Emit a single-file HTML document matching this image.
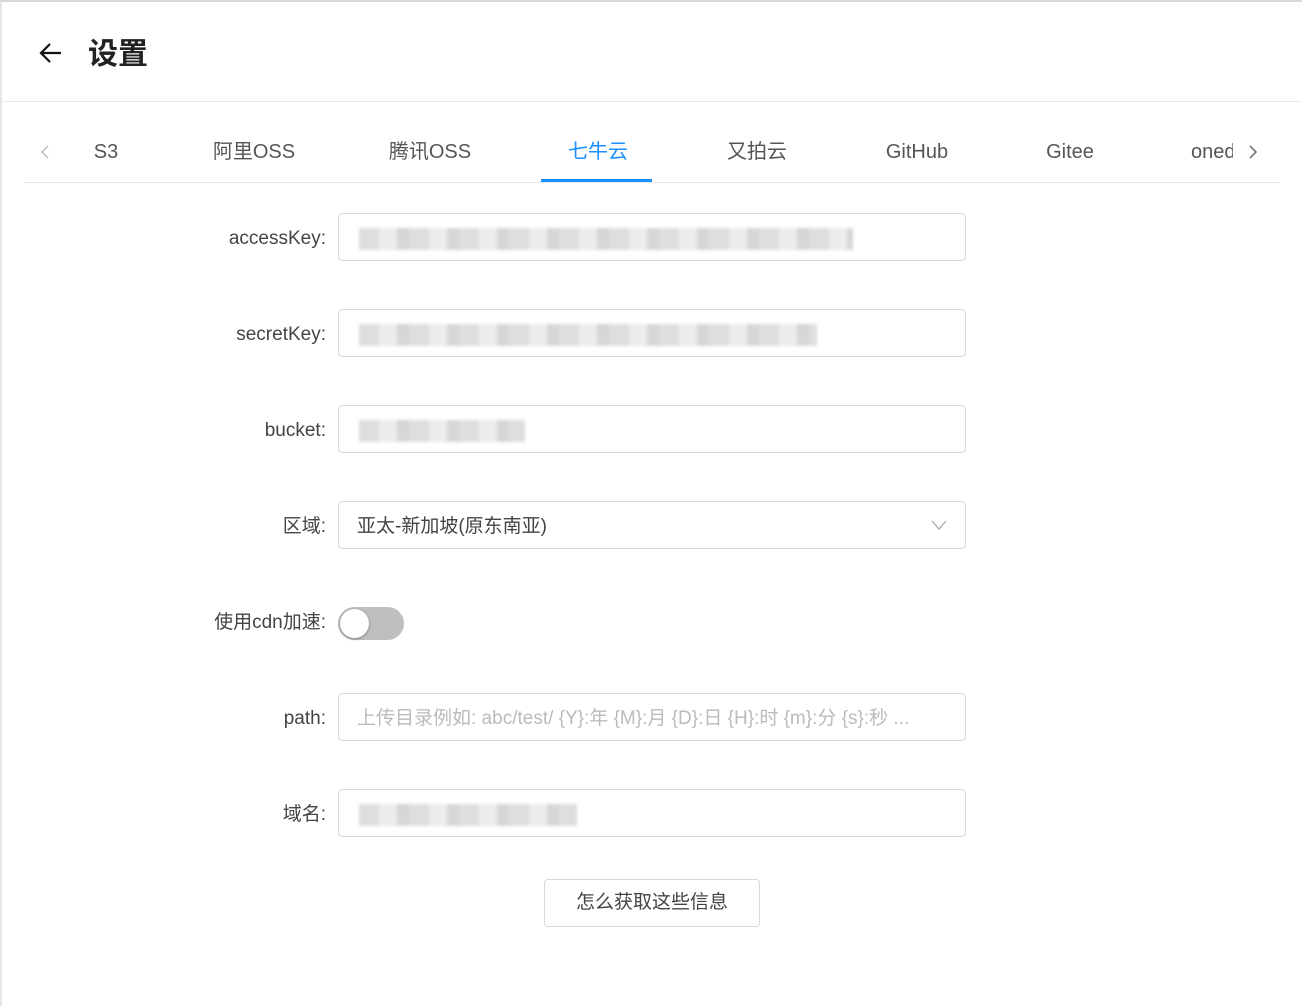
<!DOCTYPE html>
<html><head><meta charset="utf-8"><style>
*{box-sizing:border-box;margin:0;padding:0}
body{width:1302px;height:1006px;background:#fff;font-family:"Liberation Sans","Noto Sans CJK SC",sans-serif;color:#333;position:relative;overflow:hidden}
.frame{position:absolute;left:0;top:0;width:1302px;height:1006px;border-top:2px solid #d9d9d9;border-left:2px solid #e6e6e6}
.hdr{position:absolute;left:2px;top:2px;right:0;height:100px;border-bottom:1px solid #e8e8e8}
.title{position:absolute;left:86px;top:33px;font-size:30px;font-weight:bold;color:#222;line-height:40px}
.tabs{position:absolute;left:24px;top:102px;width:1256px;height:81px;border-bottom:1px solid #e8e8e8}
.tab{position:absolute;top:36px;height:28px;line-height:28px;font-size:20px;color:#555;transform:translateX(-50%);white-space:nowrap}
.ink{position:absolute;left:517px;top:77px;width:111px;height:3px;background:#1890ff}
.lbl{position:absolute;right:976px;font-size:19px;line-height:28px;height:28px;color:#444;white-space:nowrap}
.inp{position:absolute;left:338px;width:628px;height:48px;border:1px solid #d9d9d9;border-radius:4px}
.blur{position:absolute;top:14px;height:22px;left:20px;background:repeating-linear-gradient(90deg,#dedede 0 20px,#ececec 20px 38px,#d6d6d6 38px 50px);filter:blur(1.5px)}
.txt{position:absolute;left:18px;top:11px;font-size:19px;line-height:28px;white-space:nowrap}
</style></head><body>
<div class="frame"></div>
<div class="hdr">
<svg style="position:absolute;left:36px;top:39px" width="26" height="24" viewBox="0 0 26 24"><path d="M23 12H4M12 3 3 12l9 9" fill="none" stroke="#111" stroke-width="2.2"/></svg>
<div class="title">设置</div>
</div>
<div class="tabs">
<svg style="position:absolute;left:16px;top:42px" width="10" height="16" viewBox="0 0 10 16"><path d="M8 2 2 8l6 6" fill="none" stroke="#bbb" stroke-width="1.5"/></svg>
<div class="tab" style="left:82px">S3</div>
<div class="tab" style="left:230px">阿里OSS</div>
<div class="tab" style="left:406px">腾讯OSS</div>
<div class="tab" style="left:574px;color:#1890ff">七牛云</div>
<div class="tab" style="left:733px">又拍云</div>
<div class="tab" style="left:893px">GitHub</div>
<div class="tab" style="left:1046px">Gitee</div>
<div class="tab" style="left:1167px;transform:none;width:42px;overflow:hidden">onedrive</div>
<svg style="position:absolute;left:1224px;top:42px" width="10" height="16" viewBox="0 0 10 16"><path d="M2 2l6 6-6 6" fill="none" stroke="#666" stroke-width="1.5"/></svg>
<div class="ink"></div>
</div>

<div class="lbl" style="top:225px">accessKey:</div>
<div class="inp" style="top:213px"><div class="blur" style="width:494px"></div></div>
<div class="lbl" style="top:321px">secretKey:</div>
<div class="inp" style="top:309px"><div class="blur" style="width:458px"></div></div>
<div class="lbl" style="top:417px">bucket:</div>
<div class="inp" style="top:405px"><div class="blur" style="width:166px"></div></div>
<div class="lbl" style="top:513px">区域:</div>
<div class="inp" style="top:501px"><div class="txt" style="color:#444">亚太-新加坡(原东南亚)</div>
<svg style="position:absolute;right:18px;top:17px" width="16" height="12" viewBox="0 0 16 12"><path d="M1 2l7 8 7-8" fill="none" stroke="#aaa" stroke-width="1.3"/></svg></div>
<div class="lbl" style="top:609px">使用cdn加速:</div>
<div style="position:absolute;left:338px;top:607px;width:66px;height:33px;border-radius:17px;background:#bfbfbf"><div style="position:absolute;left:2px;top:2px;width:29px;height:29px;border-radius:50%;background:#fff;box-shadow:0 1px 3px rgba(0,0,0,.3)"></div></div>
<div class="lbl" style="top:705px">path:</div>
<div class="inp" style="top:693px"><div class="txt" style="color:#bbb">上传目录例如: abc/test/ {Y}:年 {M}:月 {D}:日 {H}:时 {m}:分 {s}:秒 ...</div></div>
<div class="lbl" style="top:801px">域名:</div>
<div class="inp" style="top:789px"><div class="blur" style="width:218px"></div></div>
<div style="position:absolute;left:544px;top:879px;width:216px;height:48px;border:1px solid #d9d9d9;border-radius:4px;font-size:19px;color:#444;text-align:center;line-height:46px">怎么获取这些信息</div>
</body></html>
